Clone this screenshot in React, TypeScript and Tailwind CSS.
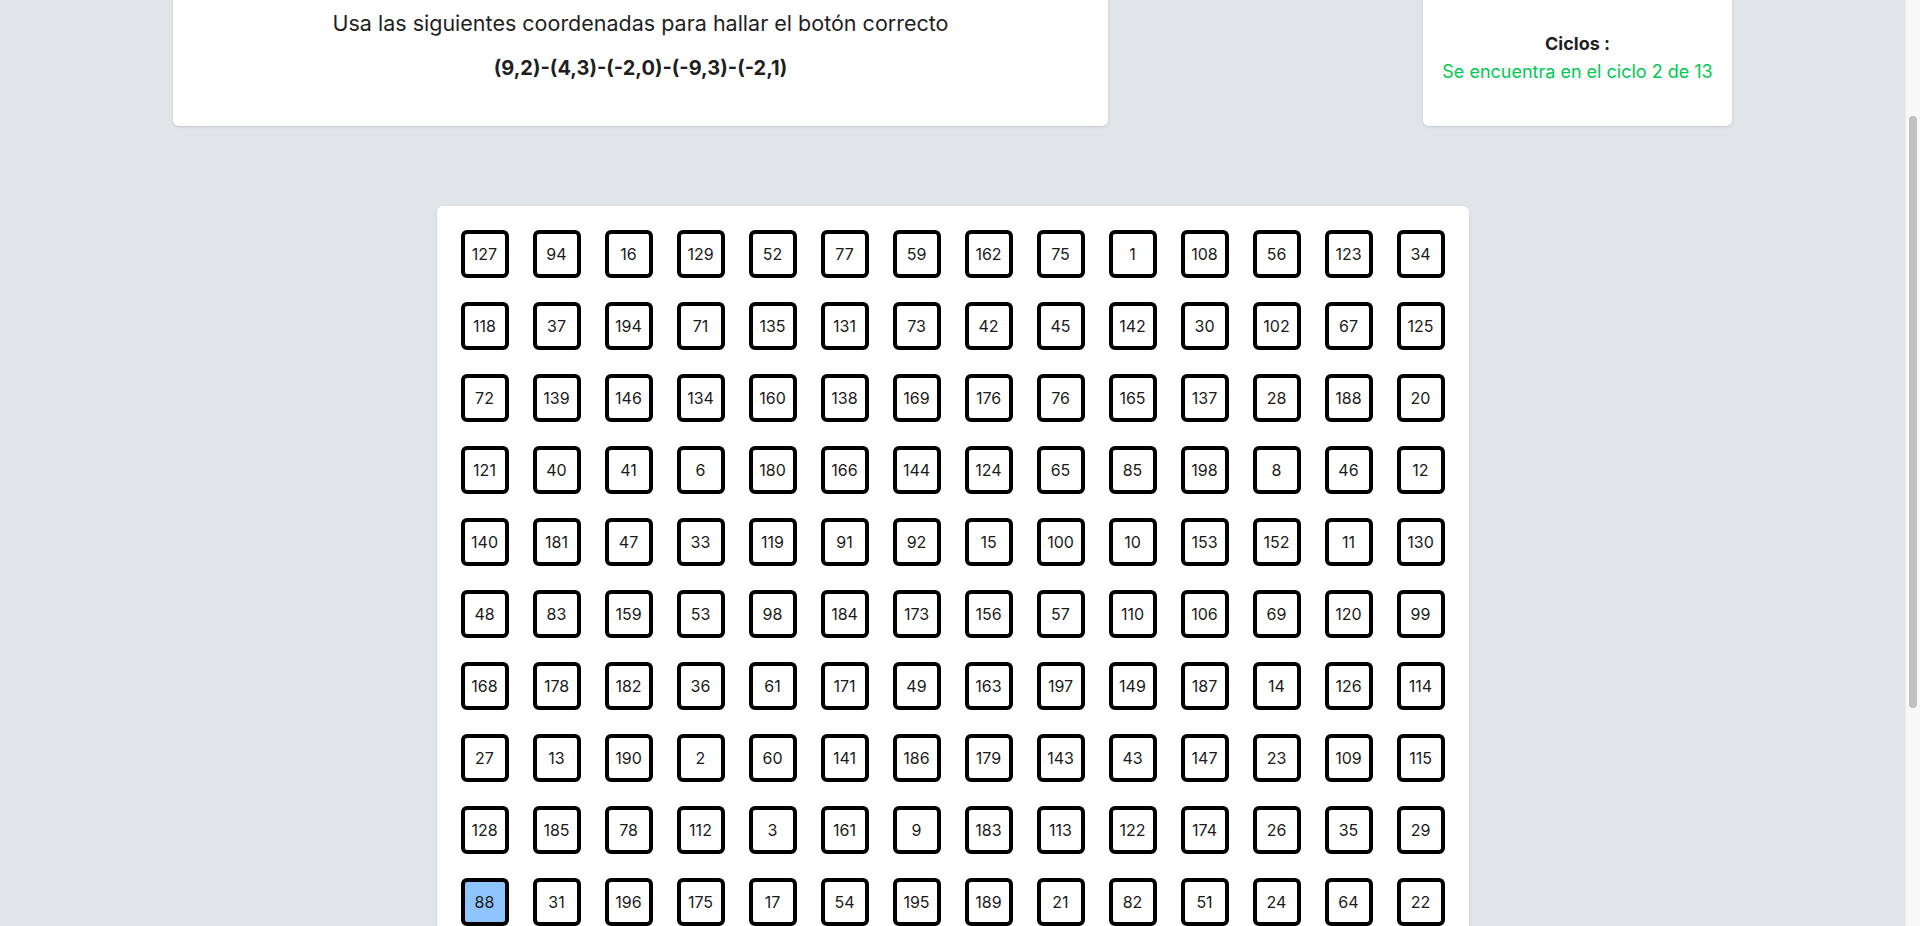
import { useLayoutEffect, useRef } from "react";

const rows: number[][] = [
  [127, 94, 16, 129, 52, 77, 59, 162, 75, 1, 108, 56, 123, 34],
  [118, 37, 194, 71, 135, 131, 73, 42, 45, 142, 30, 102, 67, 125],
  [72, 139, 146, 134, 160, 138, 169, 176, 76, 165, 137, 28, 188, 20],
  [121, 40, 41, 6, 180, 166, 144, 124, 65, 85, 198, 8, 46, 12],
  [140, 181, 47, 33, 119, 91, 92, 15, 100, 10, 153, 152, 11, 130],
  [48, 83, 159, 53, 98, 184, 173, 156, 57, 110, 106, 69, 120, 99],
  [168, 178, 182, 36, 61, 171, 49, 163, 197, 149, 187, 14, 126, 114],
  [27, 13, 190, 2, 60, 141, 186, 179, 143, 43, 147, 23, 109, 115],
  [128, 185, 78, 112, 3, 161, 9, 183, 113, 122, 174, 26, 35, 29],
  [88, 31, 196, 175, 17, 54, 195, 189, 21, 82, 51, 24, 64, 22],
];

// rest of the board (below the fold): whatever numbers are left
const used = new Set(rows.flat());
const rest: number[] = [];
for (let i = 1; i <= 200; i++) if (!used.has(i)) rest.push(i);
for (let r = 0; r < 4; r++) rows.push(rest.slice(r * 14, r * 14 + 14));

const selected = 88;

function Board() {
  return (
    <div className="mx-auto mt-20 w-[1032px] rounded-md bg-white p-6 shadow">
      <div className="grid grid-cols-14 gap-6">
        {rows.flat().map((n) => (
          <button
            key={n}
            className={
              "flex h-12 w-12 items-center justify-center rounded-md border-4 border-black text-base text-[#1a1a1a] " +
              (n === selected ? "bg-blue-300" : "bg-white")
            }
          >
            {n}
          </button>
        ))}
      </div>
    </div>
  );
}

export default function App() {
  const scroller = useRef<HTMLDivElement>(null);
  useLayoutEffect(() => {
    if (scroller.current) scroller.current.scrollTop = 180;
  }, []);

  return (
    <div className="flex h-screen bg-[#e1e4e9] font-['Inter',sans-serif]">
      <div ref={scroller} className="flex-1 overflow-y-scroll [scrollbar-width:none]">
        <div className="pb-8 pt-[154px]">
          <div className="mx-auto flex w-[1559px] items-stretch justify-between">
            {/* Instrucciones */}
            <div className="w-[935px] rounded-md bg-white px-6 pb-11 pt-[35px] text-center shadow">
              <h2 className="text-[21.5px] leading-7 text-[#1f1f1f]">Usa las siguientes coordenadas para hallar el botón correcto</h2>
              <p className="mt-[17px] text-xl leading-7 font-bold text-[#1f1f1f]">(9,2)-(4,3)-(-2,0)-(-9,3)-(-2,1)</p>
            </div>
            {/* Ciclos */}
            <div className="flex w-[309px] flex-col justify-end rounded-md bg-white px-4 pb-10 text-center shadow">
              <p className="text-lg font-bold text-[#1f1f1f]">Ciclos :</p>
              <p className="text-lg text-green-500">Se encuentra en el ciclo 2 de 13</p>
            </div>
          </div>
          <Board />
        </div>
      </div>
      {/* scrollbar */}
      <div className="relative w-[15px] shrink-0 border-l border-[#ebebeb] bg-[#f8f8f8]">
        <div className="absolute left-[3px] top-[116px] h-[592px] w-2 rounded-full bg-[#c1c1c1]" />
      </div>
    </div>
  );
}
